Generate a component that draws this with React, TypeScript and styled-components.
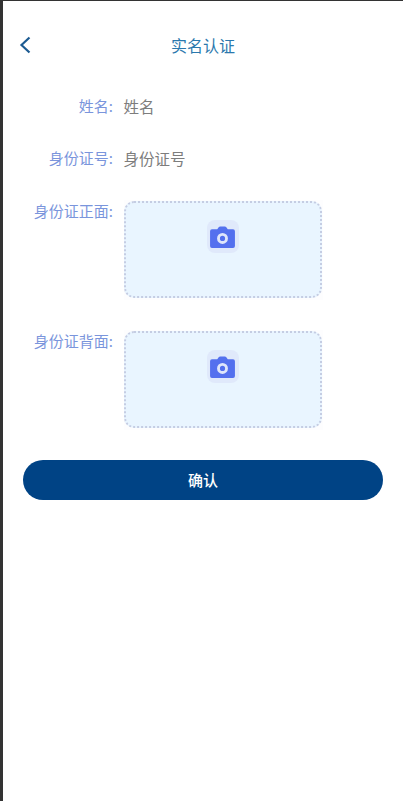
import React from "react";
import styled, { createGlobalStyle } from "styled-components";

const GlobalStyle = createGlobalStyle`
  html, body {
    margin: 0;
    padding: 0;
    height: 100%;
    background: #333;
  }
  body {
    font-family: "Noto Sans CJK SC", "Liberation Sans", sans-serif;
  }
`;

const Page = styled.div`
  box-sizing: border-box;
  width: 400px;
  height: 800px;
  margin: 1px 0 0 3px;
  background: #fff;
  display: flex;
  flex-direction: column;
`;

const Header = styled.header`
  display: flex;
  align-items: center;
  justify-content: center;
  position: relative;
  box-sizing: border-box;
  height: 90px;
  padding-bottom: 2px;
`;

const BackButton = styled.button`
  position: absolute;
  left: 14px;
  top: 34px;
  width: 16px;
  height: 20px;
  padding: 0;
  border: 0;
  background: none;
  display: flex;
`;

const Title = styled.h1`
  margin: 0;
  font-size: 16px;
  font-weight: 400;
  line-height: 20px;
  color: #2b78ad;
`;

const Form = styled.form`
  display: flex;
  flex-direction: column;
  padding-top: 1px;
`;

const Row = styled.div<{ $height: number }>`
  display: flex;
  align-items: flex-start;
  height: ${(p) => p.$height}px;
`;

const Label = styled.label<{ $lineHeight: number }>`
  box-sizing: border-box;
  width: 110px;
  flex: none;
  text-align: right;
  font-size: 15px;
  line-height: ${(p) => p.$lineHeight}px;
  color: #7a95dc;
`;

const Value = styled.span`
  margin-left: 10.5px;
  font-size: 15.5px;
  line-height: 28px;
  color: #7d7d7d;
`;

const UploadFrame = styled.div`
  margin-left: 11px;
  width: 199px;
  height: 100px;
  background: #fdfdfe;
`;

const UploadBox = styled.div`
  box-sizing: border-box;
  width: 198px;
  height: 97px;
  margin-top: 1px;
  padding-top: 17px;
  border: 2px dotted #c5cde3;
  border-radius: 10px;
  background: #e9f5ff;
  display: flex;
  justify-content: center;
  align-items: flex-start;
`;

const IconTile = styled.div`
  width: 32px;
  height: 33px;
  margin-left: -1px;
  border-radius: 8px;
  background: #e0e9fb;
  display: flex;
  align-items: center;
  justify-content: center;
`;

const SubmitButton = styled.button`
  align-self: flex-start;
  margin: 12px 0 0 20px;
  padding: 0 0 2px;
  width: 360px;
  height: 40px;
  border: 0;
  border-radius: 20px;
  background: #004385;
  color: #fff;
  font-family: inherit;
  font-size: 15px;
  font-weight: 500;
`;

const CameraIcon = () => (
  <svg width="25" height="22" viewBox="0 0 26 23">
    <path
      d="M2 3.5h5.5L9 1.2Q9.6.4 10.6.4h4.8q1 0 1.6.8l1.5 2.3H24q2 0 2 2V21q0 2-2 2H2q-2 0-2-2V5.500q0-2 2-2z"
      fill="#5470ee"
    />
    <circle cx="13" cy="13" r="4.200" fill="#5470ee" stroke="#dfe6fb" strokeWidth="3" />
  </svg>
);

const UploadRow = ({ label, height }: { label: string; height: number }) => (
  <Row $height={height}>
    <Label $lineHeight={22}>{label}</Label>
    <UploadFrame>
      <UploadBox>
        <IconTile>
          <CameraIcon />
        </IconTile>
      </UploadBox>
    </UploadFrame>
  </Row>
);

export default function App() {
  return (
    <>
      <GlobalStyle />
      <Page>
        <Header>
          <BackButton aria-label="back">
            <svg width="16" height="20" viewBox="0 0 16 20">
              <path d="M12.500 2.500 L4.500 10 L12.500 17.500" fill="none" stroke="#1c5b92" strokeWidth="2.200" />
            </svg>
          </BackButton>
          <Title>实名认证</Title>
        </Header>
        <Form>
          <Row $height={52}>
            <Label $lineHeight={28}>姓名:</Label>
            <Value>姓名</Value>
          </Row>
          <Row $height={56}>
            <Label $lineHeight={28}>身份证号:</Label>
            <Value>身份证号</Value>
          </Row>
          <UploadRow label="身份证正面:" height={130} />
          <UploadRow label="身份证背面:" height={118} />
          <SubmitButton type="button">确认</SubmitButton>
        </Form>
      </Page>
    </>
  );
}
